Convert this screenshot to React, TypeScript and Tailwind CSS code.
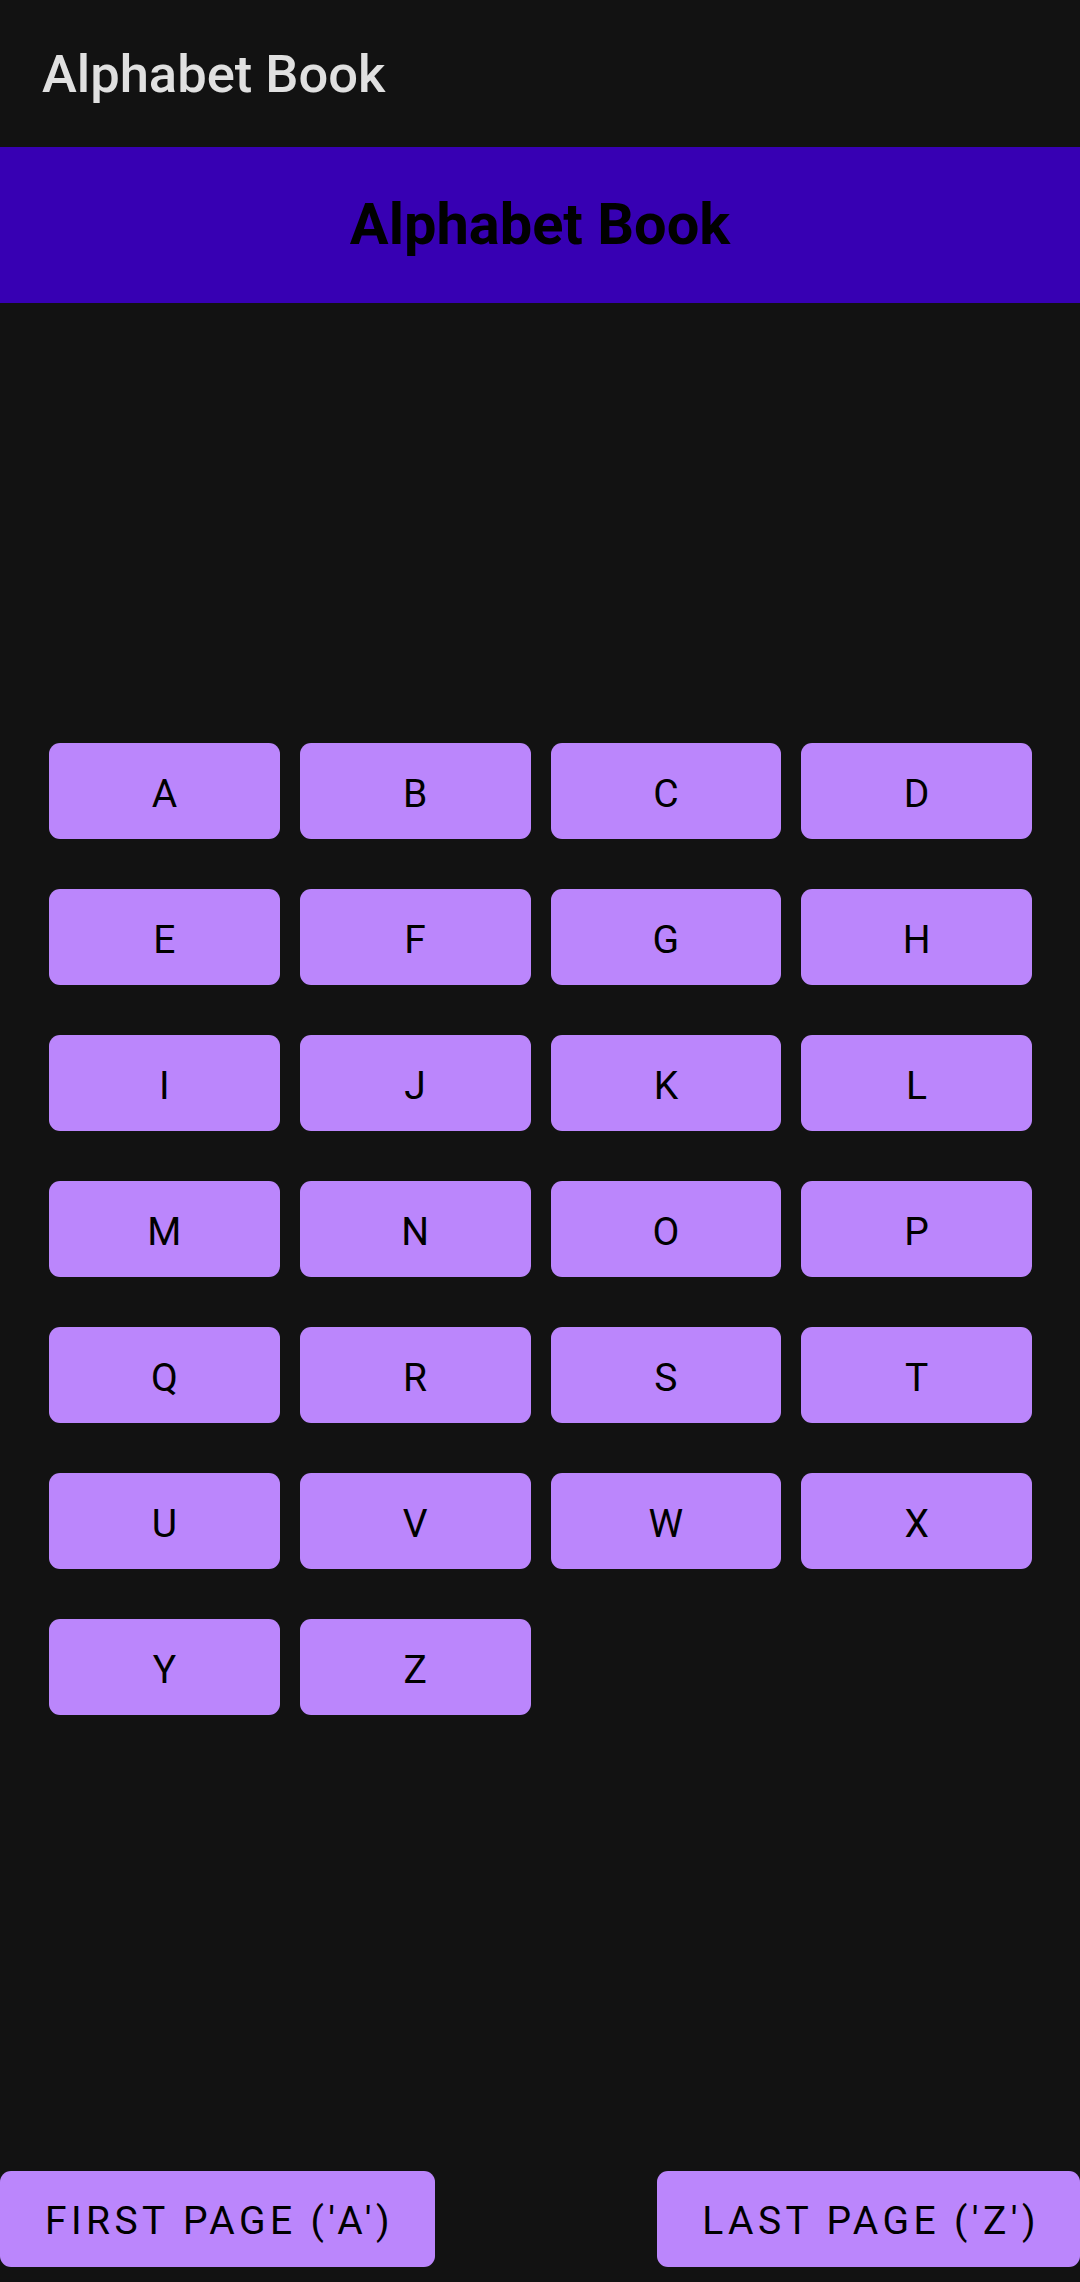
import React from "react";

const LETTERS = "ABCDEFGHIJKLMNOPQRSTUVWXYZ".split("");

export default function App() {
  return (
    <div className="flex h-[2282px] w-[1080px] flex-col bg-[#121212] font-['Roboto',sans-serif]">
      <div className="flex h-[147px] shrink-0 items-center pl-[42px] pt-[2px]">
        <span className="text-[52.5px] font-medium leading-none text-[#e0e0e0]">Alphabet Book</span>
      </div>
      <div className="flex h-[156px] shrink-0 items-center justify-center bg-[#3700b3]">
        <span className="text-[57.75px] font-bold leading-none text-black">Alphabet Book</span>
      </div>
      <div className="flex flex-1 items-center justify-center">
        <div className="grid w-[984px] grid-cols-4 gap-x-[20px] gap-y-[50px] pl-[1px]">
          {LETTERS.map((l) => (
            <button
              key={l}
              className="flex h-[96px] items-center justify-center rounded-[11px] bg-[#bb86fc] pt-[6px] text-[39px] font-normal leading-none tracking-[4.4px] text-black"
            >
              <span className="pl-[4.4px]">{l}</span>
            </button>
          ))}
        </div>
      </div>
      <div className="flex h-[127px] shrink-0 items-start justify-between pt-[16px]">
        <button className="flex h-[96px] items-center rounded-[11px] bg-[#bb86fc] pl-[45px] pr-[41px] pt-[4px] text-[39px] font-normal leading-none tracking-[4.4px] text-black">
          FIRST PAGE ('A')
        </button>
        <button className="flex h-[96px] items-center rounded-[11px] bg-[#bb86fc] pl-[45px] pr-[40px] pt-[4px] text-[39px] font-normal leading-none tracking-[4.4px] text-black">
          LAST PAGE ('Z')
        </button>
      </div>
    </div>
  );
}
